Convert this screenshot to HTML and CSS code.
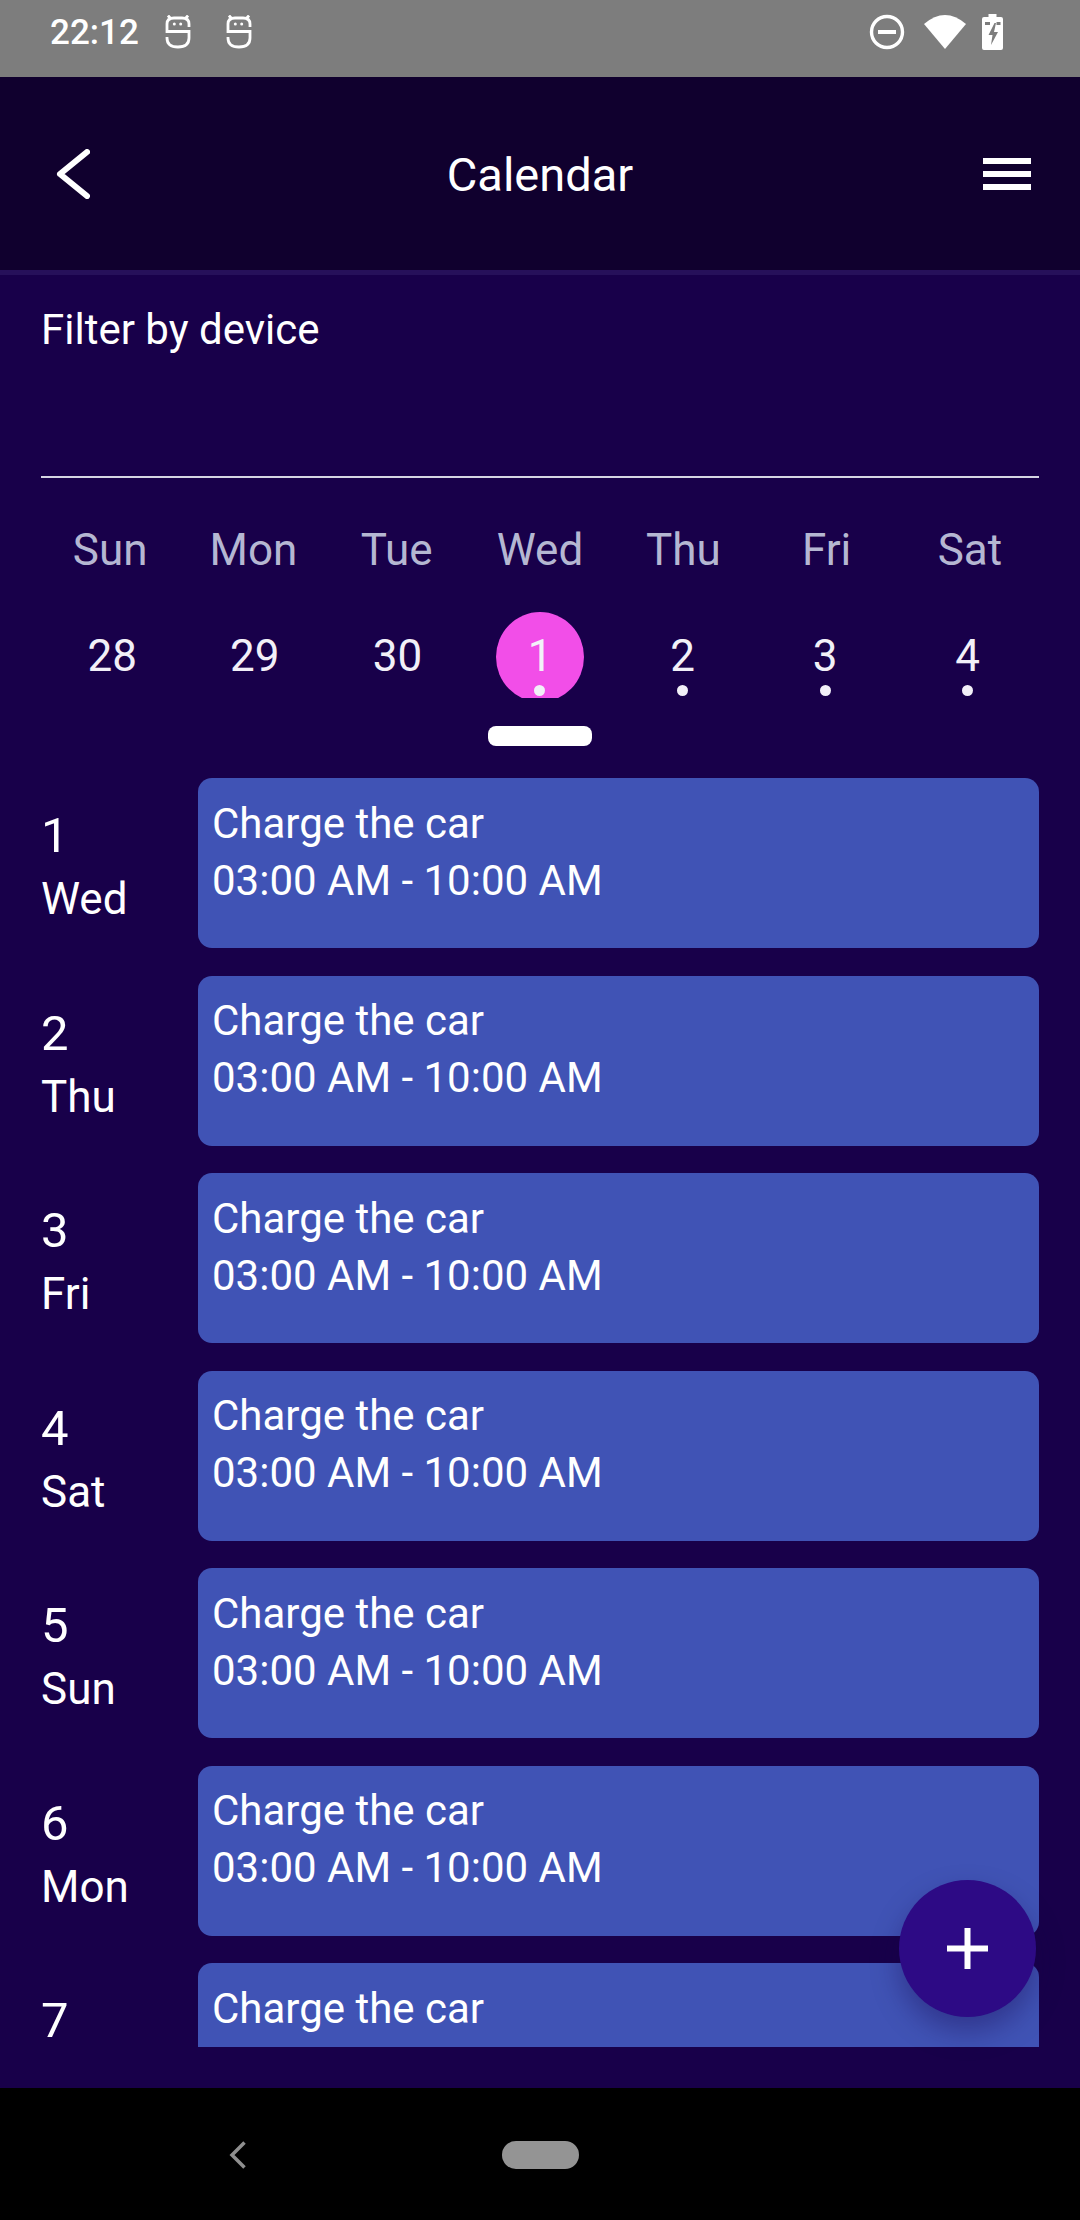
FILE: index.html
```html
<!DOCTYPE html>
<html lang="en">
<head>
<meta charset="utf-8">
<title>Calendar</title>
<link rel="stylesheet" href="styles.css">
</head>
<body>
<div class="screen">
  <div class="status">
    <div class="status-left">
      <span class="clock">22:12</span>
      <svg class="bot" viewBox="0 0 26 34" width="26" height="34"><path d="M3 .5 5.500 3.500M23 .5 20.500 3.500M24 12V9q0-6-7-6H9Q2 3 2 9v7.500h22V23q0 9-11 9T2 23v-1" fill="none" stroke="#fff" stroke-width="2.800"/><circle cx="9.300" cy="9" r="1.500" fill="#fff"/><circle cx="15.700" cy="9" r="1.500" fill="#fff"/></svg>
      <svg class="bot" viewBox="0 0 26 34" width="26" height="34"><path d="M3 .5 5.500 3.500M23 .5 20.500 3.500M24 12V9q0-6-7-6H9Q2 3 2 9v7.500h22V23q0 9-11 9T2 23v-1" fill="none" stroke="#fff" stroke-width="2.800"/><circle cx="9.300" cy="9" r="1.500" fill="#fff"/><circle cx="15.700" cy="9" r="1.500" fill="#fff"/></svg>
    </div>
    <div class="status-right">
      <svg class="dnd" viewBox="0 0 36 36" width="36" height="36"><circle cx="18" cy="18" r="15.500" fill="none" stroke="#fff" stroke-width="3.400"/><rect x="9" y="16" width="18" height="4" fill="#fff"/></svg>
      <svg class="wifi" viewBox="0 0 42 34" width="42" height="34"><path d="M0 9Q21-9 42 9L21 34Z" fill="#fff"/></svg>
      <svg class="batt" viewBox="0 0 21 36" width="21" height="36"><path fill-rule="evenodd" d="M6.500 0h8v3h4.500a2 2 0 0 1 2 2v29a2 2 0 0 1-2 2H2a2 2 0 0 1-2-2V5a2 2 0 0 1 2-2h4.500ZM3 8v3h5V8ZM14.500 8v3h4V8ZM12.500 9 6.500 21h4l-1.500 10 7-13h-4l2-9Z" fill="#fff"/></svg>
    </div>
  </div>
  <header class="appbar">
    <svg class="back" viewBox="0 0 34 50" width="34" height="50"><path d="M31 3 4 25l27 22" fill="none" stroke="#fff" stroke-width="6" stroke-linecap="round" stroke-linejoin="round"/></svg>
    <h1 class="title">Calendar</h1>
    <div class="burger"><i></i><i></i><i></i></div>
  </header>
  <main class="content">
    <div class="filter">
      <div class="filter-label">Filter by device</div>
    </div>
    <div class="week">
      <span class="wd">Sun</span><span class="wd">Mon</span><span class="wd">Tue</span><span class="wd">Wed</span><span class="wd">Thu</span><span class="wd">Fri</span><span class="wd">Sat</span>
    </div>
    <div class="dates">
      <div class="date"><span>28</span></div>
      <div class="date"><span>29</span></div>
      <div class="date"><span>30</span></div>
      <div class="date selected"><b class="circle"></b><span>1</span><i class="dot"></i></div>
      <div class="date"><span>2</span><i class="dot"></i></div>
      <div class="date"><span>3</span><i class="dot"></i></div>
      <div class="date"><span>4</span><i class="dot"></i></div>
    </div>
    <div class="handle"></div>
    <div class="agenda">
      <div class="row"><div class="day"><div class="num">1</div><div class="dname">Wed</div></div><div class="card"><div>Charge the car</div><div>03:00 AM - 10:00 AM</div></div></div>
      <div class="row"><div class="day"><div class="num">2</div><div class="dname">Thu</div></div><div class="card"><div>Charge the car</div><div>03:00 AM - 10:00 AM</div></div></div>
      <div class="row"><div class="day"><div class="num">3</div><div class="dname">Fri</div></div><div class="card"><div>Charge the car</div><div>03:00 AM - 10:00 AM</div></div></div>
      <div class="row"><div class="day"><div class="num">4</div><div class="dname">Sat</div></div><div class="card"><div>Charge the car</div><div>03:00 AM - 10:00 AM</div></div></div>
      <div class="row"><div class="day"><div class="num">5</div><div class="dname">Sun</div></div><div class="card"><div>Charge the car</div><div>03:00 AM - 10:00 AM</div></div></div>
      <div class="row"><div class="day"><div class="num">6</div><div class="dname">Mon</div></div><div class="card"><div>Charge the car</div><div>03:00 AM - 10:00 AM</div></div></div>
      <div class="row row-cut"><div class="day"><div class="num">7</div></div><div class="card card-cut"><div>Charge the car</div></div></div>
    </div>
    <button class="fab" aria-label="Add"><svg viewBox="0 0 41 41" width="41" height="41"><path d="M17.500 0h6v17.500H41v6H23.500V41h-6V23.500H0v-6h17.500Z" fill="#fff"/></svg></button>
  </main>
  <nav class="navbar">
    <svg class="nav-back" viewBox="0 0 18 28" width="18" height="28"><path d="M15.500 1.500 3 14l12.500 12.500" fill="none" stroke="#8f8f8f" stroke-width="3.500"/></svg>
    <div class="nav-home"></div>
  </nav>
</div>
</body>
</html>
```
FILE: styles.css
```css
* { box-sizing: border-box; }
html, body { margin: 0; padding: 0; }
body { font-family: Roboto, "Noto Sans", sans-serif; color: #fff; background: #000; }
.screen { width: 1080px; height: 2220px; display: flex; flex-direction: column; overflow: hidden; }

.status { flex: 0 0 77px; background: #7d7d7d; display: flex; justify-content: space-between; align-items: center; padding: 0 77px 13px 50px; }
.status-left { display: flex; align-items: center; gap: 35px; }
.clock { font-size: 35px; font-weight: 500; margin-right: -9px; }
.status-right { display: flex; align-items: center; }
.status-right svg, .status-left svg { display: block; }
.wifi { margin-left: 19px; }
.batt { margin-left: 16px; }

.appbar { flex: 0 0 198px; background: #10002e; border-bottom: 5px solid #26105a; display: flex; align-items: center; justify-content: space-between; padding: 0 49px 0 56px; position: relative; }
.title { margin: 0; font-size: 47px; line-height: 56px; padding-top: 2px; font-weight: 400; position: absolute; left: 0; right: 0; text-align: center; }
.burger { display: flex; flex-direction: column; gap: 7px; }
.burger i { display: block; width: 48px; height: 6px; background: #fff; }

.content { flex: 1; background: #18004a; position: relative; display: flex; flex-direction: column; padding: 0 41px; min-height: 0; }
.filter { height: 203px; border-bottom: 2px solid #d4d4e2; flex: none; }
.filter-label { font-size: 42px; line-height: 50px; margin-top: 30px; }

.week { display: grid; grid-template-columns: repeat(7, 1fr); margin: 47px -2.500px 0; flex: none; }
.wd { text-align: center; font-size: 44px; line-height: 50px; color: #b5b7d2; }

.dates { display: grid; grid-template-columns: repeat(7, 1fr); height: 86px; margin-top: 37px; flex: none; }
.date { position: relative; text-align: center; font-size: 44px; line-height: 88px; overflow: hidden; color: #f2f0f8; }
.date span { position: relative; }
.circle { position: absolute; left: 50%; top: 0; width: 88px; height: 90px; margin-left: -44px; border-radius: 50%; background: #f24ee8; }
.dot { position: absolute; left: 50%; top: 73px; width: 11px; height: 11px; margin-left: -5.500px; border-radius: 50%; background: #f2f0f8; }

.handle { flex: none; width: 104px; height: 20px; border-radius: 8px; background: #fff; margin: 28px auto 0; }

.agenda { flex: none; margin-top: 32px; display: flex; flex-direction: column; gap: 27.500px; }
.row { flex: none; display: flex; height: 170px; }
.row-cut { height: 84px; }
.day { width: 157px; flex: none; padding-top: 32px; }
.num { font-size: 49px; line-height: 52px; }
.dname { font-size: 44px; line-height: 56px; margin-top: 9px; }
.card { flex: 1; background: #4053b5; border-radius: 14px; padding: 16.500px 14px; font-size: 42px; line-height: 57px; }
.card-cut { border-radius: 14px 14px 0 0; }

.fab { position: absolute; left: 899px; top: 1605px; width: 137px; height: 137px; border-radius: 50%; border: 0; padding: 0; background: #2d0a85; box-shadow: 0 14px 28px rgba(20,0,70,.35); display: flex; align-items: center; justify-content: center; }
.fab svg { display: block; }

.navbar { flex: 0 0 132px; background: #000; position: relative; display: flex; align-items: flex-start; padding-top: 53px; }
.nav-back { display: block; margin-left: 229px; }
.nav-home { width: 77px; height: 28px; border-radius: 14px; background: #949494; margin-left: 255px; }
```
